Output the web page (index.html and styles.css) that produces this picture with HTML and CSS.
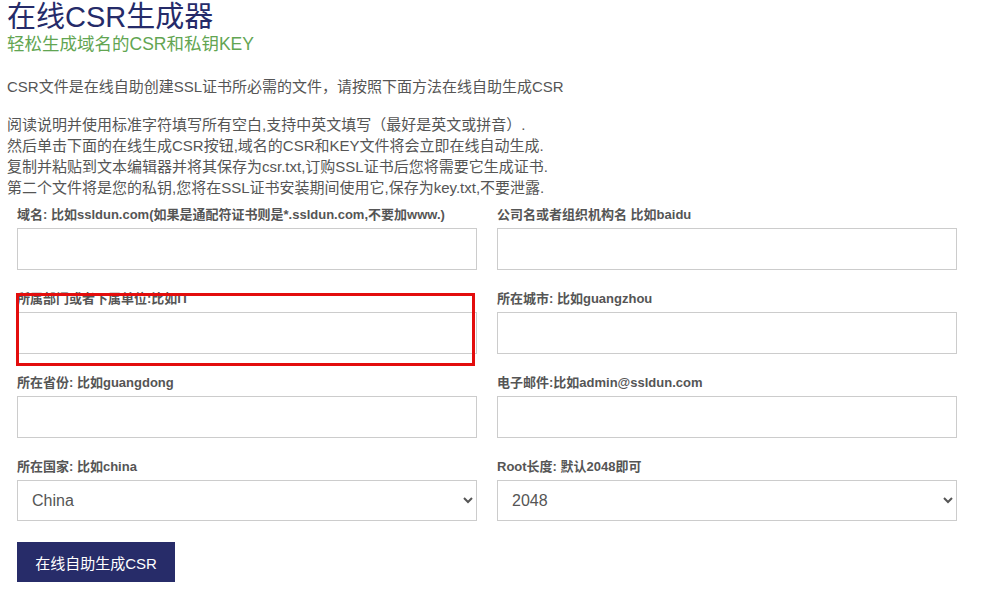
FILE: index.html
```html
<!DOCTYPE html>
<html lang="zh-CN">
<head>
  <meta charset="UTF-8">
  <meta name="viewport" content="width=device-width, initial-scale=1.0">
  <title>在线CSR生成器</title>
  <link rel="stylesheet" href="styles.css">
</head>
<body>

  <div class="page">
    <h1 class="title">在线CSR生成器</h1>
    <h2 class="subtitle">轻松生成域名的CSR和私钥KEY</h2>

    <p class="intro">CSR文件是在线自助创建SSL证书所必需的文件，请按照下面方法在线自助生成CSR</p>

    <p class="steps">
      阅读说明并使用标准字符填写所有空白,支持中英文填写（最好是英文或拼音）.<br>
      然后单击下面的在线生成CSR按钮,域名的CSR和KEY文件将会立即在线自动生成.<br>
      复制并粘贴到文本编辑器并将其保存为csr.txt,订购SSL证书后您将需要它生成证书.<br>
      第二个文件将是您的私钥,您将在SSL证书安装期间使用它,保存为key.txt,不要泄露.
    </p>

    <form class="csr-form" onsubmit="return false">
      <div class="field">
        <label for="cn">域名: 比如ssldun.com(如果是通配符证书则是*.ssldun.com,不要加www.)</label>
        <input type="text" id="cn">
      </div>
      <div class="field">
        <label for="org">公司名或者组织机构名 比如baidu</label>
        <input type="text" id="org">
      </div>
      <div class="field field-marked">
        <label for="ou">所属部门或者下属单位:比如IT</label>
        <input type="text" id="ou">
        <span class="mark"></span>
      </div>
      <div class="field">
        <label for="city">所在城市: 比如guangzhou</label>
        <input type="text" id="city">
      </div>
      <div class="field">
        <label for="province">所在省份: 比如guangdong</label>
        <input type="text" id="province">
      </div>
      <div class="field">
        <label for="email">电子邮件:比如admin@ssldun.com</label>
        <input type="text" id="email">
      </div>
      <div class="field">
        <label for="country">所在国家: 比如china</label>
        <select id="country">
          <option>China</option>
          <option>Hong Kong</option>
          <option>Taiwan</option>
          <option>United States</option>
        </select>
      </div>
      <div class="field">
        <label for="bits">Root长度: 默认2048即可</label>
        <select id="bits">
          <option>2048</option>
          <option>4096</option>
        </select>
      </div>

      <button type="submit" class="btn-generate">在线自助生成CSR</button>
    </form>
  </div>

</body>
</html>
```

FILE: styles.css
```css
body {
  margin: 0;
  background: #fff;
  color: #555;
  font-family: "Liberation Sans", "Noto Sans CJK SC", sans-serif;
}

.page {
  padding: 0 7px;
}

.title {
  margin: 0;
  font-size: 29px;
  line-height: 34px;
  font-weight: normal;
  color: #252b69;
}

.subtitle {
  margin: 0;
  font-size: 17.5px;
  line-height: 20px;
  font-weight: normal;
  color: #62a552;
}

.intro {
  margin: 22px 0 0;
  font-size: 15px;
  line-height: 21px;
}

.steps {
  margin: 17px 0 0;
  font-size: 15px;
  line-height: 21px;
}

.csr-form {
  display: grid;
  grid-template-columns: 460px 460px;
  column-gap: 20px;
  padding: 8px 10px 0;
}

.field {
  display: flex;
  flex-direction: column;
  margin-bottom: 20px;
}

.field label {
  font-family: "Liberation Sans", "Noto Sans CJK SC", sans-serif;
  font-size: 13px;
  line-height: 18px;
  font-weight: bold;
  color: #555;
  margin-bottom: 4px;
}

.field input,
.field select {
  box-sizing: border-box;
  width: 100%;
  height: 42px;
  margin: 0;
  padding: 6px 12px;
  border: 1px solid #ccc;
  background: #fff;
  font-family: "Liberation Sans", sans-serif;
  font-size: 16px;
  color: #555;
}

.field select {
  height: 41px;
  padding-left: 10px;
}

/* red frame drawn over the department field */
.field-marked {
  position: relative;
}

.mark {
  position: absolute;
  left: -1px;
  top: 3px;
  width: 459px;
  height: 73px;
  box-sizing: border-box;
  border: 3px solid #e30d0d;
  pointer-events: none;
}

.btn-generate {
  grid-column: 1;
  justify-self: start;
  width: 158px;
  height: 40px;
  margin-top: 1px;
  border: none;
  background: #272c69;
  color: #fff;
  font-family: "Liberation Sans", "Noto Sans CJK SC", sans-serif;
  font-size: 15px;
  cursor: pointer;
}
```
